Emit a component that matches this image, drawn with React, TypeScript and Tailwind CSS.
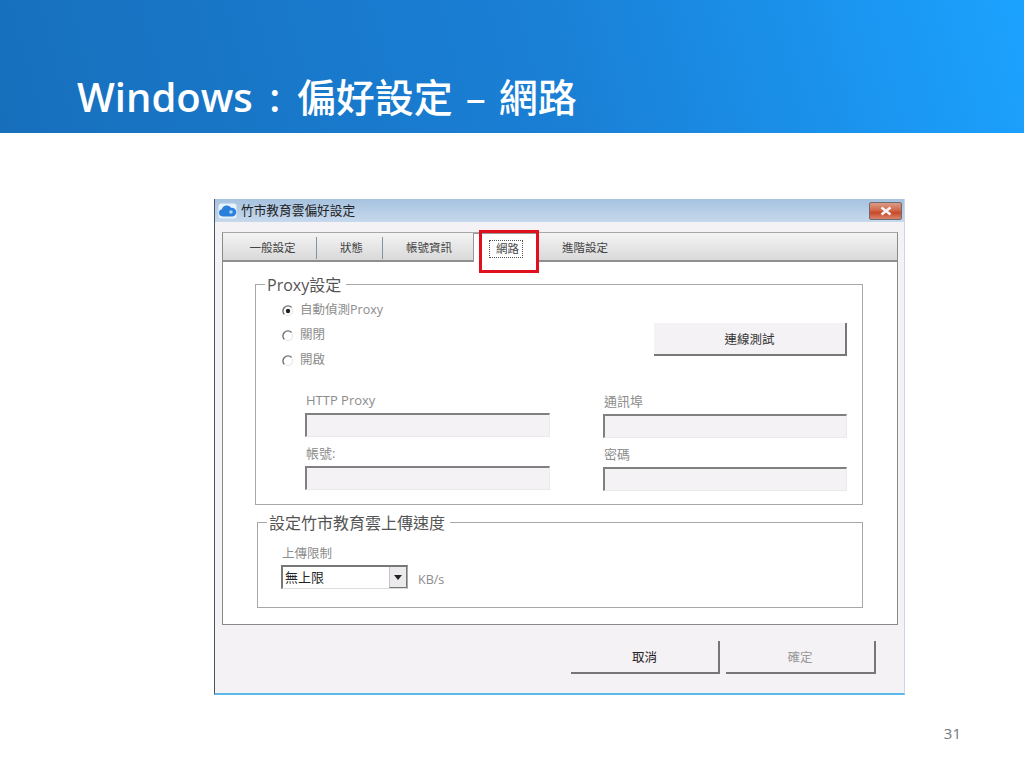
const font = { fontFamily: '"Open Sans", "Noto Sans CJK TC", sans-serif' };

const tabs = [
  { label: "一般設定", width: "w-[94px] pl-[6px]", divider: true },
  { label: "狀態", width: "w-[66px] pl-[4px]", divider: true },
  { label: "帳號資訊", width: "w-[90px] pl-[2px]", divider: false },
];

function Radio({ checked, label }: { checked?: boolean; label: string }) {
  return (
    <div className="flex h-[25px] items-center gap-[6px] text-[12.5px] text-[#8c8c8c]">
      <svg width="12" height="12" viewBox="0 0 12 12" fill="none">
        <path d="M9.6 2.4A5 5 0 0 0 2.4 9.6" stroke="#6f6f6f" strokeWidth="1.4" />
        <path d="M10.4 4A5 5 0 0 1 4 10.4" stroke="#e2e2e2" strokeWidth="1" />
        {checked && <circle cx="6" cy="6" r="2.2" fill="#222" />}
      </svg>
      <span>{label}</span>
    </div>
  );
}

function Field({ label, labelClass }: { label: string; labelClass?: string }) {
  return (
    <div>
      <div className={`h-[22px] pl-[1px] text-[13px] leading-[18px] text-[#8c8c8c] ${labelClass ?? ""}`}>{label}</div>
      <div className="h-[24px] border-t-2 border-r border-b border-l-2 border-t-[#808080] border-r-[#ebe9ec] border-b-[#ebe9ec] border-l-[#808080] bg-[#f4f2f5]" />
    </div>
  );
}

function Legend({ children }: { children: string }) {
  return (
    <div className="absolute top-[-10px] left-[9px] bg-white pr-[5px] pl-[2px] text-[16px] leading-[21px] text-[#555]">
      {children}
    </div>
  );
}

function RaisedButton({ label, className }: { label: string; className: string }) {
  return (
    <div className={`flex items-center justify-center border-r-2 border-b-2 border-r-[#777] border-b-[#777] bg-[#f5f2f5] pt-[3px] text-[12.5px] ${className}`}>
      {label}
    </div>
  );
}

export default function App() {
  return (
    <div className="relative h-[768px] w-[1024px] overflow-hidden bg-white" style={font}>
      <header className="flex h-[133px] items-end bg-[linear-gradient(75deg,#176fbc_0%,#1a80d6_55%,#1ba2ff_100%)] pb-[8px] pl-[77px]">
        <h1 className="flex items-baseline text-[40px] leading-[56px] font-semibold text-white">
          <span>Windows</span>
          <span className="w-[44px] text-center">:</span>
          <span className="text-[39px] font-medium">偏好設定</span>
          <span className="mx-[13px] font-medium">–</span>
          <span className="text-[39px] font-medium">網路</span>
        </h1>
      </header>

      <main className="mt-[66px] ml-[214px] h-[496px] w-[691px]">
        <div className="relative flex h-full flex-col border-r border-b-2 border-l border-r-[#cdd6e6] border-b-[#5cb8e6] border-l-[#4a5560] bg-[#f5f2f5]">
          {/* title bar */}
          <div className="flex h-[23px] shrink-0 items-center bg-[linear-gradient(180deg,#a6c2df,#c6d9ed)] pr-[2px] pl-[3px]">
            <svg width="19" height="16" viewBox="0 0 19 16">
              <rect x="0.5" y="0.5" width="18" height="15" rx="3" fill="#e8f2fb" />
              <path d="M4.5 13.5a3.7 3.7 0 0 1-.6-7.3A5 5 0 0 1 13 4.8a4.3 4.3 0 0 1 1.6 8.7z" fill="#2a7fdc" />
              <circle cx="13" cy="9" r="1.8" fill="#a8d4f8" />
            </svg>
            <span className="ml-[4px] text-[12.7px] text-[#222]">竹市教育雲偏好設定</span>
            <div className="ml-auto flex h-[18px] w-[33px] items-center justify-center rounded-[2px] border border-[#6b6b70] bg-[linear-gradient(180deg,#dc9a86,#d0694c_45%,#c9482a_60%,#d9846c)]">
              <svg width="14" height="10" viewBox="0 0 14 10">
                <path d="M2.5 1.5 11.5 8.5M11.5 1.5 2.5 8.5" stroke="#f4f4f4" strokeWidth="2.6" />
              </svg>
            </div>
          </div>

          {/* tab panel */}
          <div className="mx-[7px] mt-[10px] flex h-[393px] w-[676px] flex-col border border-[#8a8a8a] border-t-[#a8a8a8] bg-white">
            <div className="flex h-[29px] shrink-0 items-stretch border-b-2 border-b-[#8f8f8f] bg-[linear-gradient(180deg,#f4f4f4,#d9d9d9)] text-[11.5px] text-[#444]">
              {tabs.map((tab) => (
                <div key={tab.label} className={`flex items-center justify-center pt-[2px] ${tab.width}`}>
                  <span className="flex h-[22px] w-full items-center justify-center border-r border-r-[#7f93a8]" style={tab.divider ? undefined : { borderRight: "none" }}>
                    {tab.label}
                  </span>
                </div>
              ))}
              <div className="mb-[-2px] flex w-[64px] items-center justify-center border-t border-r border-l border-[#999] bg-white pt-[2px] pl-[2px]">
                <span className="flex h-[18px] w-[34px] items-center justify-center border border-dotted border-[#555] pl-[3px]">網路</span>
              </div>
              <div className="flex w-[90px] items-center justify-center pt-[2px] pl-[6px]">進階設定</div>
            </div>

            <div className="flex-1 pt-[22px] pr-[33px] pl-[32px]">
              {/* proxy group */}
              <div className="relative h-[221px] w-[608px] border border-[#a8a8a8] pr-[15px] pl-[26px]">
                <Legend>Proxy設定</Legend>
                <div className="flex h-[106px] items-start">
                  <div className="pt-[13px]">
                    <Radio checked label="自動偵測Proxy" />
                    <Radio label="關閉" />
                    <Radio label="開啟" />
                  </div>
                  <RaisedButton label="連線測試" className="mt-[38px] ml-auto h-[33px] w-[193px] text-[#333]" />
                </div>
                <div className="ml-[-1px] grid grid-cols-[245px_244px] gap-x-[53px] pl-[24px]">
                  <div>
                    <Field label="HTTP Proxy" />
                    <Field label="帳號:" labelClass="mt-[7px]" />
                  </div>
                  <div className="mt-[1px]">
                    <Field label="通訊埠" />
                    <Field label="密碼" labelClass="mt-[7px]" />
                  </div>
                </div>
              </div>

              {/* upload speed group */}
              <div className="relative mt-[17px] ml-[2px] h-[86px] w-[606px] border border-[#a8a8a8] pt-[21px] pl-[23px]">
                <Legend>設定竹市教育雲上傳速度</Legend>
                <div className="h-[21px] pl-[1px] text-[12.5px] leading-[20px] text-[#8c8c8c]">上傳限制</div>
                <div className="flex items-center gap-[10px]">
                  <div className="flex h-[24px] w-[127px] items-stretch border-t-2 border-r border-b border-l-2 border-t-[#777] border-r-[#aaa] border-b-[#ddd] border-l-[#777] bg-white">
                    <span className="flex-1 pl-[2px] text-[13px] leading-[21px] text-[#222]">無上限</span>
                    <div className="flex w-[18px] items-center justify-center border-r border-b border-l border-r-[#777] border-b-[#777] border-l-[#c4c4c4] bg-[#eceaec]">
                      <svg width="8" height="5" viewBox="0 0 8 5">
                        <path d="M0 0h8L4 5z" fill="#222" />
                      </svg>
                    </div>
                  </div>
                  <span className="mt-[6px] text-[12.5px] text-[#8c8c8c]">KB/s</span>
                </div>
              </div>
            </div>
          </div>

          {/* dialog buttons */}
          <div className="mt-[16px] ml-[356px] flex gap-[6px]">
            <RaisedButton label="取消" className="h-[33px] w-[149px] text-[#222]" />
            <RaisedButton label="確定" className="h-[33px] w-[150px] text-[#999]" />
          </div>

          {/* highlight around the active tab */}
          <div className="absolute top-[31px] left-[264px] h-[43px] w-[60px] border-[3px] border-[#e0101c]" />
        </div>
      </main>

      <div className="mt-[28px] mr-[63px] text-right text-[15px] leading-[20px] text-[#777]">31</div>
    </div>
  );
}
